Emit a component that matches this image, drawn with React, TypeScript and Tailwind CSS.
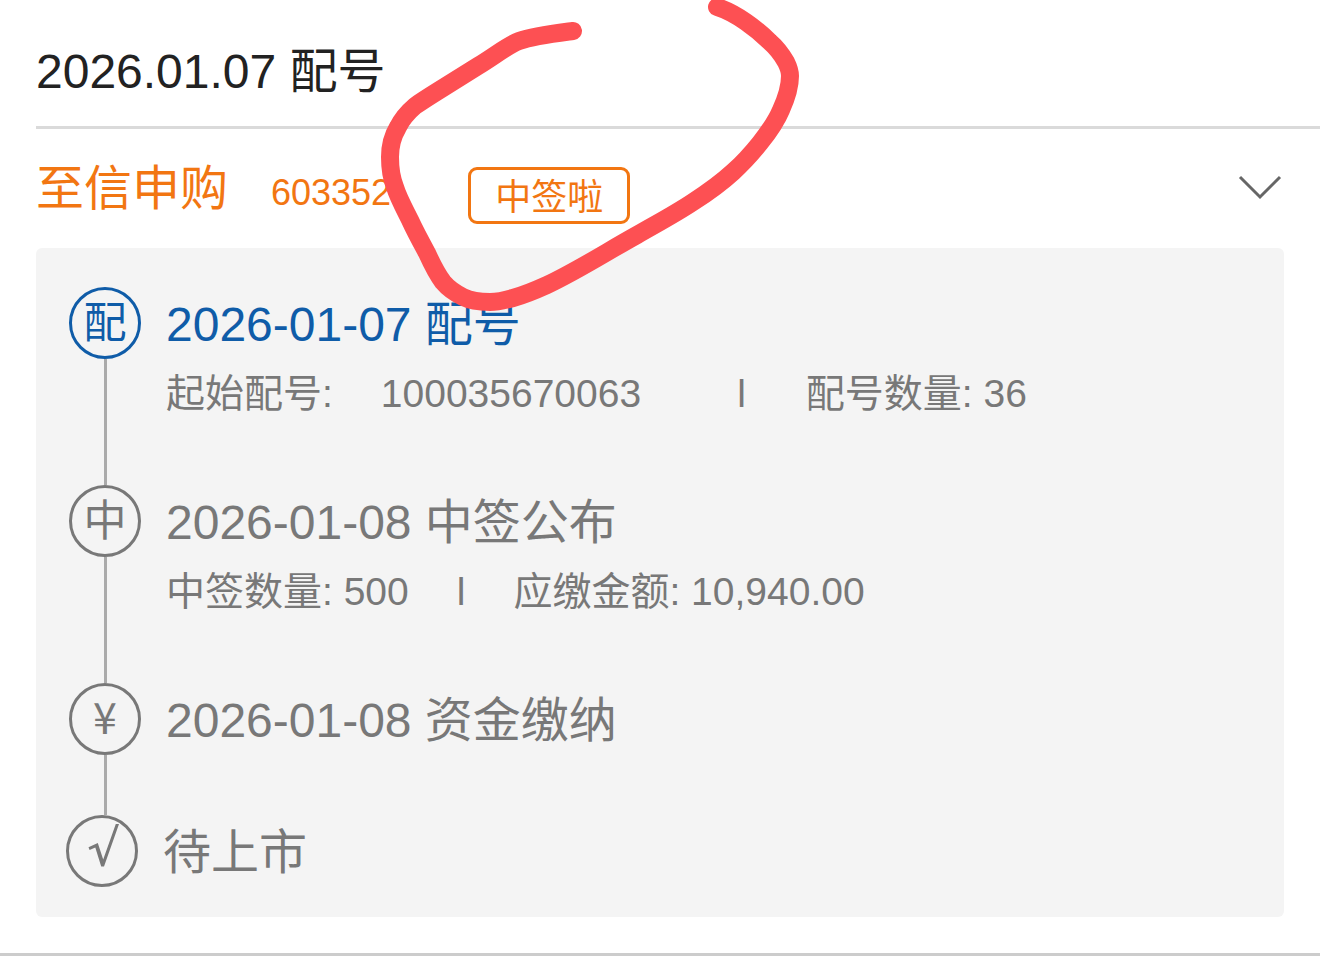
import type { ReactNode } from "react";
import { clsx } from "clsx";

type Step = {
  mark: string;
  title: string;
  active?: boolean;
  detail?: ReactNode;
};

const steps: Step[] = [
  {
    mark: "配",
    title: "2026-01-07 配号",
    active: true,
    detail: (
      <>
        <span>起始配号:</span>
        <span className="ml-12">100035670063</span>
        <span className="ml-24" aria-hidden>l</span>
        <span className="ml-15">配号数量: 36</span>
      </>
    ),
  },
  {
    mark: "中",
    title: "2026-01-08 中签公布",
    detail: (
      <>
        <span>中签数量: 500</span>
        <span className="ml-12" aria-hidden>l</span>
        <span className="ml-12">应缴金额: 10,940.00</span>
      </>
    ),
  },
  { mark: "¥", title: "2026-01-08 资金缴纳" },
];

function StepMark({ children, active }: { children: ReactNode; active?: boolean }) {
  return (
    <span
      className={clsx(
        "flex size-18 shrink-0 items-center justify-center rounded-full border-3 pb-2 font-['Noto_Sans_CJK_SC',sans-serif] text-[43px] leading-none",
        active ? "border-[#0f5ca8]" : "border-[#787878]",
      )}
    >
      {children}
    </span>
  );
}

function TimelineStep({ mark, title, active, detail }: Step) {
  return (
    <li className={clsx("flex gap-[25px]", active ? "text-[#0f5ca8]" : "text-[#787878]")}>
      <div className="flex flex-col items-center">
        <StepMark active={active}>{mark}</StepMark>
        <span className="w-[3px] flex-1 bg-[#aaaaaa]" />
      </div>
      <div className={detail ? "pb-15" : "pb-14"}>
        <h3 className="text-5xl leading-[76px]">{title}</h3>
        {detail && (
          <p className="flex flex-wrap text-[39px] leading-[62px] text-[#787878]">{detail}</p>
        )}
      </div>
    </li>
  );
}

// Hand-drawn marker loop around the badge
function MarkerLoop() {
  return (
    <svg
      className="pointer-events-none absolute top-0 left-[370px]"
      width="440"
      height="320"
      viewBox="370 0 440 320"
      fill="none"
      stroke="#fd5053"
      strokeWidth="18"
      strokeLinecap="round"
      strokeLinejoin="round"
      aria-hidden
    >
      <path d="M573 31C550 34 533 36 519 41C508 45 496 55 478 66L438 91C430 96 422 101 415 106C408 112 402 119 398 127C392 137 390 147 390 157C390 167 391 177 395 187C398 197 404 208 410 220C415 231 421 242 427 253C432 264 437 274 443 282C448 288 455 293 463 297C471 301 480 302 490 302C498 302 506 300 513 298C524 295 536 290 547 285C577 271 608 251 637 235C656 224 675 214 693 202C707 193 721 183 733 172C743 163 752 153 760 143C768 133 776 122 781 110C786 99 790 88 790 76C790 71 788 66 786 62C782 55 777 48 770 42C757 29 736 13 717 7" />
    </svg>
  );
}

export default function App() {
  return (
    <main className="relative overflow-hidden border-b-3 border-[#cccccc] bg-white pb-9 font-['Liberation_Sans','Noto_Sans_CJK_SC',sans-serif]">
      <header className="ml-9 border-b-3 border-[#dadada] pt-[18px]">
        <h1 className="text-5xl leading-[108px] text-[#222222]">2026.01.07 配号</h1>
      </header>

      <section className="px-9">
        <div className="flex h-[119px] items-center text-[#f27612]">
          <h2 className="text-5xl leading-[72px]">至信申购</h2>
          <span className="ml-[43px] pt-2 text-4xl">603352</span>
          <span className="mt-[14px] ml-[77px] rounded-[9px] border-3 px-6 pt-1 text-4xl leading-[47px]">
            中签啦
          </span>
          <button type="button" aria-label="收起" className="mb-[2px] ml-auto text-[#666666]">
            <svg width="48" height="30" viewBox="0 0 48 30" fill="none" stroke="currentColor" strokeWidth="3">
              <path d="M4 4L24 24L44 4" />
            </svg>
          </button>
        </div>

        <div className="rounded-md bg-[#f4f4f4] pt-[39px] pb-[26px]">
          <ol className="pl-[33px]">
            {steps.map((step) => (
              <TimelineStep key={step.title} {...step} />
            ))}
          </ol>
          <div className="flex gap-[25px] pl-[30px] text-[#787878]">
            <StepMark>
              <svg width="44" height="48" viewBox="0 0 44 48" fill="currentColor" aria-hidden>
                <path d="M8.5 24.2L17.8 20L23.2 36.5L35.8 1H39L24 43.5H21.2L15.3 24.6L9.6 27Z" />
              </svg>
            </StepMark>
            <h3 className="text-5xl leading-[76px]">待上市</h3>
          </div>
        </div>
      </section>

      <MarkerLoop />
    </main>
  );
}
